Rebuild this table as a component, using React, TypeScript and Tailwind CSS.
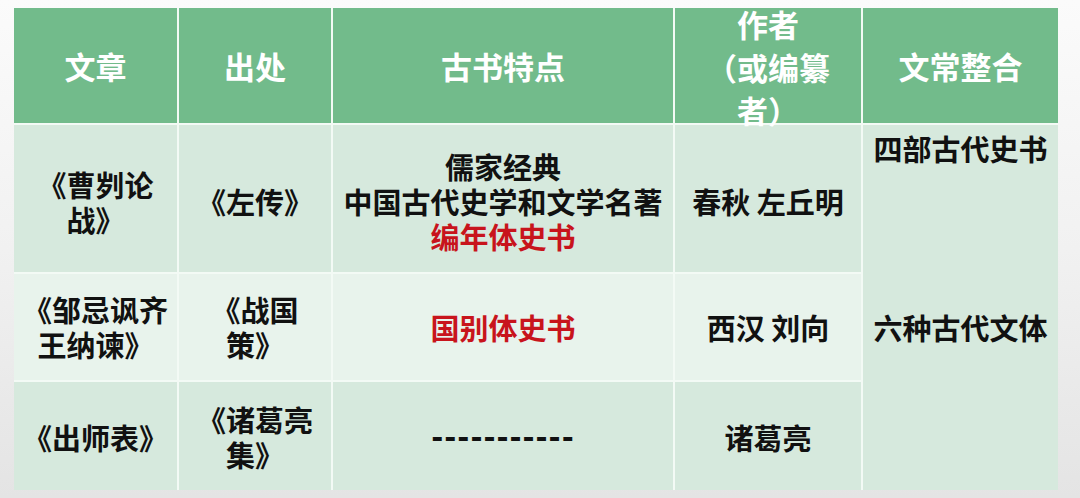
export default function App() {
  const head = "bg-[#72bb8b] text-white text-[31px] font-bold flex items-center justify-center text-center leading-[43px]";
  const cell = "flex flex-col items-center justify-center text-center text-[29px] font-bold leading-[35px] text-[#111] whitespace-nowrap";
  const dark = "bg-[#d6e9dd]";
  const light = "bg-[#e8f3ec]";

  return (
    <div className="w-[1080px] h-[498px] overflow-hidden bg-gradient-to-b from-[#fbfbfb] via-[#f1f1f1] to-[#e4e4e4] pt-[8px] pl-[14px] font-['Noto_Sans_CJK_SC','Liberation_Sans',sans-serif]">
      <div className="w-[1044px] h-[482px] grid grid-cols-[163px_152px_340px_186px_195px] grid-rows-[115px_147px_106px_108px] gap-[2px] bg-[#f3faf5]">
        {/* header */}
        <div className={head}>文章</div>
        <div className={head}>出处</div>
        <div className={head}>古书特点</div>
        <div className={head + " flex-col pt-[2px] relative z-10"}>
          <div>作者</div>
          <div>（或编纂</div>
          <div>者）</div>
        </div>
        <div className={head}>文常整合</div>

        {/* row 1 */}
        <div className={`${cell} ${dark} pt-[6px]`}>
          <div>《曹刿论</div>
          <div>战》</div>
        </div>
        <div className={`${cell} ${dark} pt-[6px]`}>《左传》</div>
        <div className={`${cell} ${dark} pt-[6px]`}>
          <div>儒家经典</div>
          <div>中国古代史学和文学名著</div>
          <div className="text-[#c8141c]">编年体史书</div>
        </div>
        <div className={`${cell} ${dark} pt-[6px]`}>春秋 左丘明</div>
        <div className={`${dark} row-span-3 flex flex-col items-center text-[29px] font-bold leading-[35px] text-[#111] whitespace-nowrap`}>
          <div className="mt-[6px]">四部古代史书</div>
          <div className="mt-[144px]">六种古代文体</div>
        </div>

        {/* row 2 */}
        <div className={`${cell} ${light}`}>
          <div>《邹忌讽齐</div>
          <div>王纳谏》</div>
        </div>
        <div className={`${cell} ${light}`}>
          <div>《战国</div>
          <div>策》</div>
        </div>
        <div className={`${cell} ${light} text-[#c8141c]`}>国别体史书</div>
        <div className={`${cell} ${light}`}>西汉 刘向</div>

        {/* row 3 */}
        <div className={`${cell} ${dark} pt-[2px]`}>《出师表》</div>
        <div className={`${cell} ${dark} pt-[2px]`}>
          <div>《诸葛亮</div>
          <div>集》</div>
        </div>
        <div className={`${cell} ${dark} pt-[2px] tracking-[1px] font-['DejaVu_Sans',sans-serif]`}>-----------</div>
        <div className={`${cell} ${dark} pt-[2px]`}>诸葛亮</div>
      </div>
    </div>
  );
}
